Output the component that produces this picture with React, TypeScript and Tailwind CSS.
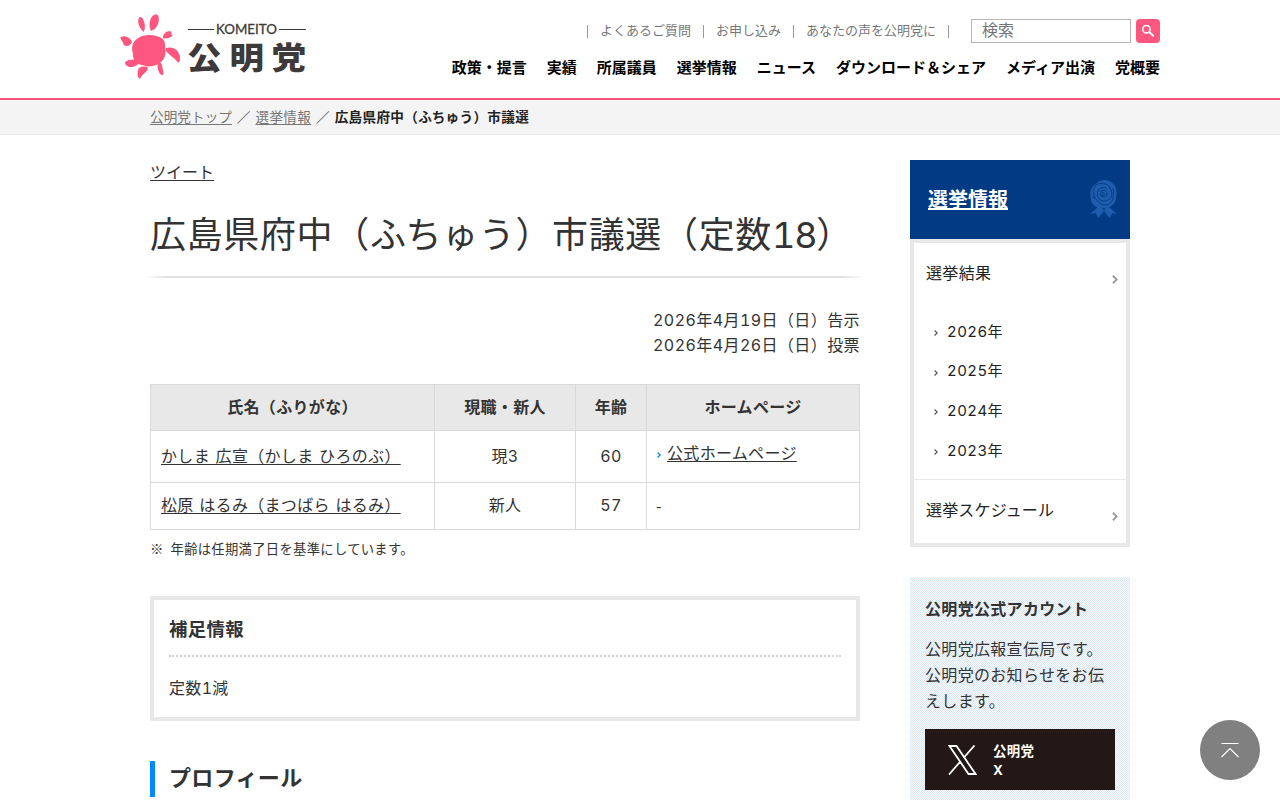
import React from "react";

const utilityLinks = [
  { title: "よくあるご質問", width: "w-[116px]" },
  { title: "お申し込み", width: "w-[90px]" },
  { title: "あなたの声を公明党に", width: "w-[155px]" },
];

const mainNav = [
  "政策・提言",
  "実績",
  "所属議員",
  "選挙情報",
  "ニュース",
  "ダウンロード＆シェア",
  "メディア出演",
  "党概要",
];

const years = ["2026年", "2025年", "2024年", "2023年"];

const Logo: React.FC = () => (
  <a href="#" aria-label="公明党" className="block">
    <svg width="187" height="68" viewBox="0 0 187 68" className="block">
      <g fill="#fd567f">
        <path d="M17 25C21 21 30 20 36 22C42 23 45 26 45 31C46 37 46 43 42 47C39 51 30 54 24 51.5C17 51 12.5 46 13 40C11 33 12.5 28 17 25Z" />
        <path d="M19.5 3C17 6 18 13 23.5 18C26 14 25 8 22 3.5Z" />
        <path d="M34 1C30 3 28 11 31 17C37 15 40 8 38.5 2.5C38 0.5 36 0 34 1Z" />
        <path d="M51 17.5C46 16 43 20 43 24C47 25.5 49 23.5 53 22C51 21 52 20 51 17.5Z" />
        <path d="M46 34C52 32 58 35 59.5 41C60.5 45 60 49 58 48.5C55 44 50 42 46 37Z" />
        <path d="M37.5 49.5C40 48 42 49 42 52C43 56 44 59 43 61C40 62 37 56 37.5 49.5Z" />
        <path d="M19 54C23 52 28 52 28 55C26 59 22 60 20 65C17 63.5 17 57 19 54Z" />
        <path d="M5 48C8 45 15 45 19.5 46C20.5 50 14 54 9 53C6 52 5 50 5 48Z" />
        <path d="M0.5 23C5 21 10 23 12 28C10 33 4 33 3 29C2 26 0 25 0.5 23Z" />
      </g>
      <path d="M68 15.5h26M159 15.5h27" stroke="#3e3a39" strokeWidth="1" />
      <text x="96" y="20" textLength="61" lengthAdjust="spacingAndGlyphs" fontSize="13" fontWeight="400" fill="#3e3a39" stroke="#3e3a39" strokeWidth="0.3" fontFamily="Lato, sans-serif">
        KOMEITO
      </text>
      <text transform="translate(0 54.5) scale(1 0.9)" fontSize="34.5" fontWeight="900" fill="#3e3a39" fontFamily="'Liberation Sans', 'Noto Sans CJK JP', sans-serif">
        <tspan x="67">公</tspan>
        <tspan x="109.5">明</tspan>
        <tspan x="151.5">党</tspan>
      </text>
    </svg>
  </a>
);

const Header: React.FC = () => (
  <header className="h-[100px] border-b-2 border-[#f8547c] bg-white tracking-normal">
    <div className="mx-auto flex w-[1040px] justify-between">
      <div className="pt-[14px]">
        <Logo />
      </div>
      <div className="flex flex-col items-end pt-[19px]">
        <div className="flex h-6 items-center">
          <ul className="flex items-center border-r border-[#999] text-[13px] leading-[13px] text-[#777]">
            {utilityLinks.map((link) => (
              <li key={link.title} className={`${link.width} border-l border-[#999] pl-3 whitespace-nowrap`}>
                <span className="relative -top-px">{link.title}</span>
              </li>
            ))}
          </ul>
          <input
            type="text"
            placeholder="検索"
            className="ml-[22px] h-6 w-40 border border-[#b5b5b5] px-[10px] pb-[2px] text-base leading-[20px] placeholder:text-[#757575]"
          />
          <button type="button" aria-label="検索" className="ml-[5px] flex size-6 items-center justify-center rounded-[4px] bg-[#fd567f]">
            <svg width="14" height="14" viewBox="0 0 14 14" fill="none" stroke="#fff">
              <circle cx="5.4" cy="5.2" r="3.7" strokeWidth="1.6" />
              <path d="M8 7.8l4.8 4.6" strokeWidth="2" />
            </svg>
          </button>
        </div>
        <nav className="mt-[14px]">
          <ul className="flex gap-5 text-[15px] leading-[22px] font-bold whitespace-nowrap text-black">
            {mainNav.map((item) => (
              <li key={item}>{item}</li>
            ))}
          </ul>
        </nav>
      </div>
    </div>
  </header>
);

const Breadcrumb: React.FC = () => (
  <div className="h-[35px] border-b border-[#e8e8e8] bg-[#f4f4f4]">
    <div className="mx-auto flex w-[980px] text-[13.6px] leading-[34px] whitespace-nowrap text-[#777]">
      <a href="#" className="w-[82px] tracking-[0.005em] underline underline-offset-2">公明党トップ</a>
      <span className="w-[23.5px] text-center text-[#444]">／</span>
      <a href="#" className="underline underline-offset-2">選挙情報</a>
      <span className="w-[23.5px] text-center text-[#444]">／</span>
      <strong className="text-[#222]">広島県府中（ふちゅう）市議選</strong>
    </div>
  </div>
);

const Chevron: React.FC<{ className?: string }> = ({ className }) => (
  <svg viewBox="0 0 4 6" fill="none" stroke="currentColor" strokeWidth="1.2" className={className}>
    <path d="M0.6 0.5L3.2 3L0.6 5.5" />
  </svg>
);

const CandidateTable: React.FC = () => (
  <table className="mt-[26px] w-[710px] table-fixed border-collapse text-base leading-[26px] [&_td]:border [&_td]:border-[#d9d9d9] [&_th]:border [&_th]:border-[#d9d9d9]">
    <colgroup>
      <col className="w-[284px]" />
      <col className="w-[141px]" />
      <col className="w-[71px]" />
      <col className="w-[213px]" />
    </colgroup>
    <thead>
      <tr className="h-[46px] bg-[#e8e8e8]">
        <th className="pb-[2px]">氏名（ふりがな）</th>
        <th className="pb-[2px]">現職・新人</th>
        <th className="pb-[2px]">年齢</th>
        <th className="pb-[2px]">ホームページ</th>
      </tr>
    </thead>
    <tbody>
      <tr className="h-[52px]">
        <td className="pb-[2px] pl-[10px] [word-spacing:1px]">
          <a href="#" className="underline underline-offset-2">かしま 広宣（かしま ひろのぶ）</a>
        </td>
        <td className="pb-[2px] text-center">現3</td>
        <td className="pb-[2px] text-center">60</td>
        <td className="pb-[7px] pl-[10px]">
          <a href="#" className="flex items-center">
            <Chevron className="mt-[3px] mr-[6px] h-[6px] w-1 text-[#0085e8]" />
            <span className="underline underline-offset-2">公式ホームページ</span>
          </a>
        </td>
      </tr>
      <tr className="h-[47px]">
        <td className="pb-[2px] pl-[10px] [word-spacing:1px]">
          <a href="#" className="underline underline-offset-2">松原 はるみ（まつばら はるみ）</a>
        </td>
        <td className="pb-[2px] text-center">新人</td>
        <td className="pb-[2px] text-center">57</td>
        <td className="pb-[2px] pl-[9px] font-['Noto_Sans_CJK_JP',sans-serif]">-</td>
      </tr>
    </tbody>
  </table>
);

const Rosette: React.FC = () => (
  <svg width="28" height="38" viewBox="0 0 28 38" className="-mt-[2px]">
    <path d="M9 26L0 34L6 33L8 38L15 30ZM18 26L27 34L22 33L20 38L13 30Z" fill="#1f5cac" />
    <path d="M6 4C9-1 19-1 22 3C27 6 27 12 26 18C26 24 20 28 14 28C7 29 1 25 1 19C-1 12 1 7 6 4Z" fill="#1f5cac" />
    <g fill="none" stroke="#023b83" strokeWidth="0.9">
      <path d="M6 5C10 2 18 3 20 8C24 14 21 21 14 21C9 21 6 16 8 11C9 8 12 7 16 8" />
      <path d="M10 12C12 9 17 10 17 14C16 18 10 17 10 14C12 11 15 12 14 15H11" />
      <path d="M2 17C7 17 8 25 15 25C21 25 25 19 23 8M6 5C3 9 3 13 5 19" />
    </g>
  </svg>
);

const Sidebar: React.FC = () => (
  <aside className="w-[220px]">
    <div className="flex h-[79px] items-center justify-between bg-[#023b83] pr-3 pl-[18px]">
      <a href="#" className="text-xl leading-8 font-bold tracking-normal text-white underline decoration-2 underline-offset-1 [text-decoration-skip-ink:none]">選挙情報</a>
      <Rosette />
    </div>
    <div className="h-[308px] border-4 border-[#e8e8e8] text-[#222]">
      <div className="flex h-[69px] items-center justify-between pr-2 pl-3">
        <span className="-mt-[10px] text-base">選挙結果</span>
        <Chevron className="mt-[3px] h-[9px] w-[6px] text-[#999]" />
      </div>
      <ul className="h-[168px] border-b border-[#e8e8e8] text-[15px] tracking-[0.4px]">
        {years.map((year) => (
          <li key={year} className="flex h-[39.8px] items-center pl-5">
            <Chevron className="mt-[2px] mr-[9px] h-[6px] w-1 text-[#555]" />
            {year}
          </li>
        ))}
      </ul>
      <div className="flex h-[61px] items-center justify-between pr-2 pl-3">
        <span className="-mt-px text-base tracking-[0.01em]">選挙スケジュール</span>
        <Chevron className="mt-3 h-[9px] w-[6px] text-[#999]" />
      </div>
    </div>
    <div className="mt-[30px] h-[240px] bg-[#f4f9fe] bg-[repeating-conic-gradient(#d9e6f6_0_25%,#fafcff_0_50%)] bg-[length:2px_2px] px-[15px] pt-[19px]">
      <h2 className="text-base leading-[26px] font-bold">公明党公式アカウント</h2>
      <p className="mt-[14px] text-base leading-[26px] whitespace-nowrap">
        公明党広報宣伝局です。
        <br />
        公明党のお知らせをお伝
        <br />
        えします。
      </p>
      <a href="#" className="mt-[15px] flex h-[61px] items-center bg-[#231815] pl-[23px] text-white">
        <svg width="29" height="30" viewBox="0 0 29 30" fill="none" stroke="#fff" strokeWidth="1.8">
          <path d="M1.5 1h7L27.5 29h-7ZM26.5 0.5L15.5 13M12 17L1 29.5" />
        </svg>
        <span className="mt-[3px] ml-4 text-[13.4px] leading-[19px] font-bold">
          公明党
          <br />X
        </span>
      </a>
    </div>
  </aside>
);

const Article: React.FC = () => (
  <main className="w-[710px]">
    <a href="#" className="block w-16 text-base leading-6 tracking-normal underline underline-offset-2">ツイート</a>
    <h1 className="mt-[26px] text-[36px] leading-[50px] tracking-[0.65px] whitespace-nowrap">
      広島県府中（ふちゅう）市議選（定数<span className="tracking-[-1.2px]">18</span>）
    </h1>
    <div className="-mx-[5px] mt-[16px] h-[2px] bg-[linear-gradient(to_right,transparent,#e2e2e2_3%,#e2e2e2_97%,transparent)]" />
    <p className="mt-[30px] text-right text-base leading-[25px] tracking-[0.42px]">
      2026年4月19日（日）告示
      <br />
      2026年4月26日（日）投票
    </p>
    <CandidateTable />
    <p className="mt-[8px] text-[13.3px] leading-[21px] [word-spacing:3px]">
      <span className="font-['Noto_Sans_CJK_JP',sans-serif]">※</span> 年齢は任期満了日を基準にしています。
    </p>
    <section className="mt-[36px] h-[125px] border-4 border-[#e8e8e8] px-[15px] pt-4">
      <h2 className="border-b-2 border-dotted border-[#d5d5d5] pb-[12px] text-[18.4px] leading-[27px] font-bold">補足情報</h2>
      <p className="mt-[18px] text-base leading-[26px]">定数1減</p>
    </section>
    <h2 className="mt-10 border-l-5 border-[#0088ff] pl-[14px] text-[22px] leading-9 font-bold">
      <span className="relative -top-px">プロフィール</span>
    </h2>
  </main>
);

export default function App() {
  return (
    <div className="h-[800px] overflow-hidden bg-white font-[Inter,'Noto_Sans_CJK_JP',sans-serif] tracking-[0.02em] text-[#333] tabular-nums">
      <Header />
      <Breadcrumb />
      <div className="mx-auto flex w-[980px] justify-between pt-[25px]">
        <Article />
        <Sidebar />
      </div>
      <a href="#" aria-label="ページトップへ" className="fixed right-5 bottom-5 flex size-[60px] items-center justify-center rounded-full bg-[#808080]">
        <svg width="18" height="16" viewBox="0 0 18 16" fill="none" stroke="#fff" strokeWidth="1.1">
          <path d="M0.5 1.5h17M0.5 15L9 6.5L17.5 15" />
        </svg>
      </a>
    </div>
  );
}
